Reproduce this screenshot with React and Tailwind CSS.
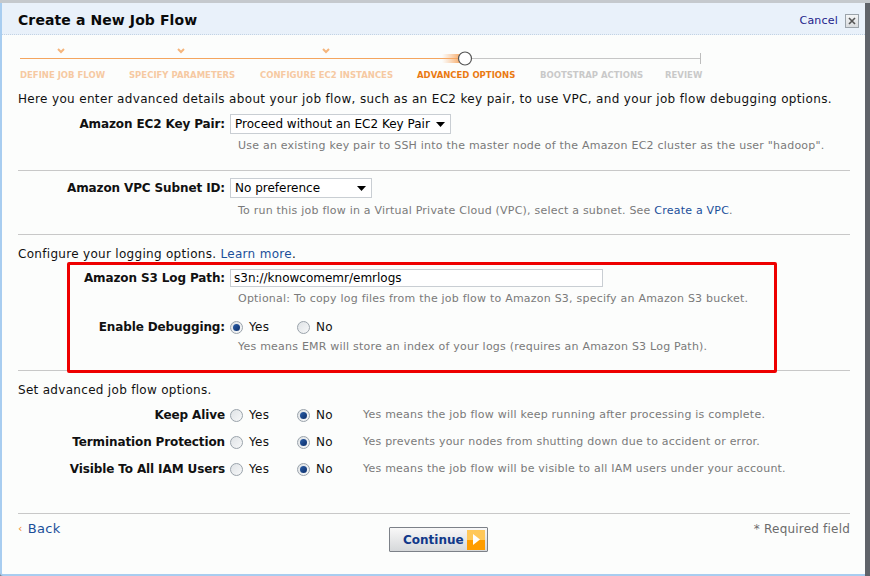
import React from "react";

const F = "font-['DejaVu_Sans',Verdana,sans-serif]";

function Radio({ checked }) {
  return (
    <span className="relative inline-flex h-[13px] w-[13px] shrink-0 items-center justify-center rounded-full border border-[#9aa3ab] bg-gradient-to-br from-[#dfe3e6] to-[#f7f8f9]">
      {checked && (
        <span className="h-[7px] w-[7px] rounded-full bg-gradient-to-br from-[#2a5ea8] to-[#0d2f6b]" />
      )}
    </span>
  );
}

function YesNo({ yes }) {
  return (
    <div className="flex items-center text-[12px] tracking-[0.3px] text-[#111]">
      <div className="flex w-[67px] items-center gap-[6px]">
        <Radio checked={yes} />
        <span>Yes</span>
      </div>
      <div className="flex w-[66px] items-center gap-[6px]">
        <Radio checked={!yes} />
        <span>No</span>
      </div>
    </div>
  );
}

function Select({ w, value }) {
  return (
    <div
      className={`flex h-[20px] ${w} items-center justify-between border border-[#c9ced3] bg-white pl-[4px] pr-[5px] text-[12px] text-black`}
    >
      <span>{value}</span>
      <svg width="9" height="5" viewBox="0 0 9 5">
        <path d="M0 0H9L4.5 5Z" fill="#000" />
      </svg>
    </div>
  );
}

function Divider() {
  return <div className="h-px bg-[#c8c8c8]" />;
}

const HELP = "text-[11px] tracking-[0.22px] text-[#7a7a7a]";
const LBL = "text-right font-bold tracking-[-0.12px]";

export default function App() {
  return (
    <div className={`relative h-[576px] w-[870px] overflow-hidden bg-[#6f747a] ${F}`}>
      <div className="h-[3px] bg-[#c5c9cd]" />
      <div className="flex h-[573px] w-[865px] flex-col rounded-bl-[3px] border-b-2 border-l-2 border-[#a8cdf0] bg-[#fcfdfc]">
        {/* header */}
        <div className="flex h-[32px] shrink-0 items-center justify-between border-b border-dotted border-[#c3d3e4] bg-[#e9f1fa] pl-[16px] pr-[6px] pt-[4px]">
          <div className="text-[14px] font-bold tracking-[0.1px] text-[#0a0a0a]">Create a New Job Flow</div>
          <div className="flex items-center gap-[7px] pt-[1px]">
            <span className="text-[11px] tracking-[0.2px] text-[#23238a]">Cancel</span>
            <span className="flex h-[14px] w-[14px] items-center justify-center border border-[#9ba3aa] bg-gradient-to-b from-[#f4f5f6] to-[#d9dcdf]">
              <svg width="8" height="8" viewBox="0 0 8 8">
                <path d="M1 1L7 7M7 1L1 7" stroke="#555" strokeWidth="1.6" />
              </svg>
            </span>
          </div>
        </div>

        {/* steps */}
        <div className="relative h-[50px] shrink-0 pl-[16px]">
          <svg className="absolute left-0 top-[11px]" width="720" height="22" viewBox="0 0 720 22">
            <defs>
              <linearGradient id="fade" x1="0" x2="1" y1="0" y2="0">
                <stop offset="0" stopColor="#f7b37a" stopOpacity="0" />
                <stop offset="1" stopColor="#f7a35a" stopOpacity="0.9" />
              </linearGradient>
            </defs>
            {[59, 179, 324].map((x) => (
              <path key={x} d={`M${x - 3} 3L${x} 6L${x + 3} 3`} stroke="#f5b57c" strokeWidth="2" fill="none" />
            ))}
            <line x1="18" y1="12.5" x2="456" y2="12.5" stroke="#f4a55f" strokeWidth="1.2" />
            <rect x="440" y="8" width="18" height="9" fill="url(#fade)" />
            <line x1="470" y1="12.5" x2="698" y2="12.5" stroke="#c6c6c6" strokeWidth="1" />
            <line x1="698.5" y1="7" x2="698.5" y2="18" stroke="#bdbdbd" strokeWidth="1" />
            <circle cx="463" cy="12.5" r="6.5" fill="#fff" stroke="#555" strokeWidth="1.2" />
          </svg>
          <div className="absolute left-[18px] top-[34px] flex text-[8.5px] font-bold tracking-[0px]">
            <span className="w-[109px] text-[#f6c9a2]">DEFINE JOB FLOW</span>
            <span className="w-[131px] text-[#f6c9a2]">SPECIFY PARAMETERS</span>
            <span className="w-[157px] text-[#f6c9a2]">CONFIGURE EC2 INSTANCES</span>
            <span className="w-[123px] text-[#ea7a12]">ADVANCED OPTIONS</span>
            <span className="w-[125px] text-[#c9c9c9]">BOOTSTRAP ACTIONS</span>
            <span className="text-[#c9c9c9]">REVIEW</span>
          </div>
        </div>

        {/* body */}
        <div className="flex flex-col pl-[16px] pr-[15px] text-[12px] text-[#111]">
          <div className="mt-[3px] flex h-[22px] items-center tracking-[0.34px]">
            Here you enter advanced details about your job flow, such as an EC2 key pair, to use VPC, and your job flow debugging options.
          </div>

          <div className="flex h-[28px] items-center">
            <div className={`w-[207px] ${LBL}`}>Amazon EC2 Key Pair:</div>
            <div className="ml-[5px]">
              <Select w="w-[221px]" value="Proceed without an EC2 Key Pair" />
            </div>
          </div>
          <div className={`flex h-[16px] items-center pl-[220px] ${HELP}`}>
            Use an existing key pair to SSH into the master node of the Amazon EC2 cluster as the user "hadoop".
          </div>
          <div className="h-[16px]" />
          <Divider />

          <div className="flex h-[34px] items-center">
            <div className={`w-[207px] ${LBL}`}>Amazon VPC Subnet ID:</div>
            <div className="ml-[5px]">
              <Select w="w-[142px]" value="No preference" />
            </div>
          </div>
          <div className={`flex h-[12px] items-center pl-[220px] ${HELP}`}>
            <span>
              To run this job flow in a Virtual Private Cloud (VPC), select a subnet. See{" "}
              <span className="text-[#1b4f9a]">Create a VPC</span>.
            </span>
          </div>
          <div className="h-[17px]" />
          <Divider />

          <div className="mt-[10px] flex h-[17px] items-center tracking-[0.3px]">
            <span>
              Configure your logging options. <span className="text-[#1b4f9a]">Learn more</span>.
            </span>
          </div>

          <div className="relative z-10 ml-[49px] flex h-[111px] w-[710px] flex-col rounded-[2px] border-[3px] border-[#ee0000]">
            <div className="flex h-[26px] items-center">
              <div className={`w-[155px] ${LBL}`}>Amazon S3 Log Path:</div>
              <div className="ml-[5px] flex h-[18px] w-[373px] items-center border border-[#c9ced3] bg-white pl-[3px] text-[12px] text-black">
                s3n://knowcomemr/emrlogs
              </div>
            </div>
            <div className={`flex h-[16px] items-center pl-[168px] ${HELP}`}>
              Optional: To copy log files from the job flow to Amazon S3, specify an Amazon S3 bucket.
            </div>
            <div className="mt-[6px] flex h-[28px] items-center">
              <div className={`w-[155px] ${LBL}`}>Enable Debugging:</div>
              <div className="ml-[5px]">
                <YesNo yes />
              </div>
            </div>
            <div className={`flex h-[12px] items-center pl-[168px] ${HELP}`}>
              Yes means EMR will store an index of your logs (requires an Amazon S3 Log Path).
            </div>
          </div>
          <div className="-mt-[3px]">
            <Divider />
          </div>

          <div className="mt-[10px] flex h-[18px] items-center tracking-[0.3px]">Set advanced job flow options.</div>

          {[
            ["Keep Alive", "Yes means the job flow will keep running after processing is complete."],
            ["Termination Protection", "Yes prevents your nodes from shutting down due to accident or error."],
            ["Visible To All IAM Users", "Yes means the job flow will be visible to all IAM users under your account."],
          ].map(([label, help], i) => (
            <div key={label} className={`flex h-[26px] items-center ${i === 0 ? "mt-[3px]" : "mt-[1px]"}`}>
              <div className={`w-[207px] ${LBL}`}>{label}</div>
              <div className="ml-[5px]">
                <YesNo yes={false} />
              </div>
              <div className={HELP}>{help}</div>
            </div>
          ))}

          <div className="h-[31px]" />
          <Divider />

          <div className="relative flex h-[55px] items-start justify-between">
            <div className="mt-[5px] flex items-center gap-[5px] text-[13px] tracking-[0.3px]">
              <span className="text-[11px] text-[#f08a2c]">‹</span>
              <span className="text-[#1b4f9a]">Back</span>
            </div>
            <div className="absolute left-[371px] top-[13px] flex h-[25px] w-[99px] items-center justify-between rounded-[1px] border border-[#7c8188] bg-gradient-to-b from-[#f8f8f8] to-[#d6d8da] pl-[13px] pr-[2px]">
              <span className="text-[12px] font-bold text-[#11398a]">Continue</span>
              <span className="flex h-[20px] w-[18px] items-center justify-center bg-gradient-to-b from-[#ffc85a] from-50% to-[#ff9d00] to-50%">
                <svg width="7" height="11" viewBox="0 0 7 11">
                  <path d="M0 0L7 5.5L0 11Z" fill="#fff" />
                </svg>
              </span>
            </div>
            <div className="mt-[6px] text-[12px] tracking-[0.2px] text-[#6b6b6b]">* Required field</div>
          </div>
        </div>
      </div>
      <div className="absolute right-0 top-[3px] h-[573px] w-[5px] bg-[#5f6369]" />
    </div>
  );
}
